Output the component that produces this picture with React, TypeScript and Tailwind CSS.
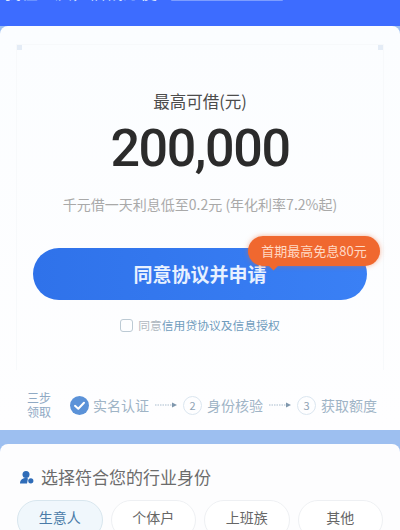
import React from "react";

const cjk = "font-['Noto_Sans_CJK_SC','Noto_Sans',sans-serif]";

function Corner({ className }: { className: string }) {
  return <span className={`absolute h-[5px] w-[5px] bg-[#e4ecf6] ${className}`}></span>;
}

function StepNumber({ n }: { n: number }) {
  return (
    <span className="flex h-[19px] w-[19px] shrink-0 items-center justify-center rounded-full border border-[#dbe6f0] text-[11px] leading-none text-[#8fa3b5]">
      {n}
    </span>
  );
}

function Arrow() {
  return (
    <svg width="22" height="6" viewBox="0 0 22 6" className="mx-[6px] shrink-0">
      <line x1="0" y1="3" x2="17" y2="3" stroke="#a9bccd" strokeWidth="1" strokeDasharray="1.5 1" />
      <path d="M17 0.5 L22 3 L17 5.5 Z" fill="#7f97ad" />
    </svg>
  );
}

export default function App() {
  const tags = ["生意人", "个体户", "上班族", "其他"];

  return (
    <div className={`h-[530px] w-[400px] overflow-hidden bg-[#9dbff0] ${cjk}`}>
      {/* blue header, the title is cut by the top edge */}
      <div className="flex h-[26px] items-start gap-[14px] overflow-hidden bg-[#3d6cff] pl-[4px]">
        <span className="mt-[-16px] whitespace-nowrap text-[17px] leading-[16px] text-[#dfe8ff]">我在重庆，借钱方便</span>
        <span className="h-[1px] w-[112px] rounded-b bg-[#7d9dff]"></span>
      </div>

      {/* main card */}
      <div className="flex h-[404px] flex-col rounded-t-[8px] bg-gradient-to-b from-[#fbfdff] to-[#fefeff]">
        <div className="relative mx-[16px] mt-[18px] flex h-[326px] flex-col items-center border-x border-t border-[#f7f9fb] pt-[45px]">
          <Corner className="left-0 top-0" />
          <Corner className="right-0 top-0" />
          <div className="text-[16.5px] leading-[22px] text-[#4c4c4c]">最高可借(元)</div>
          <div className="mt-[7px] font-['Roboto',sans-serif] text-[52px] font-medium leading-[60px] tracking-[-1.4px] text-[#2b2b2b]">200,000</div>
          <div className="mt-[16px] whitespace-nowrap text-[14px] leading-[18px] text-[#a9a9a9]">千元借一天利息低至0.2元 (年化利率7.2%起)</div>

          <div className="relative mt-[35px] flex h-[52px] w-[334px] shrink-0 items-center justify-center rounded-full bg-gradient-to-r from-[#2f72ea] to-[#3a80f5] text-[19px] font-bold text-[#e8f1ff]">
            同意协议并申请
            <div className="absolute right-[-13px] top-[-12px] flex h-[30px] w-[132px] items-center justify-center rounded-full bg-[#f0682f] text-[13px] font-normal text-[#ffd9c4] shadow-[0_0_5px_rgba(240,104,47,0.5)]">
              首期最高免息80元
              <span className="absolute bottom-[-3px] left-[22px] h-[7px] w-[7px] rotate-45 bg-[#f0682f]"></span>
            </div>
          </div>

          <div className="mt-[17px] flex items-center text-[11.8px] leading-[16px] text-[#b0b8c0]">
            <span className="mr-[5px] h-[13px] w-[13px] rounded-[3px] border border-[#bccad4]"></span>
            同意<span className="text-[#6f9cbd]">信用贷协议及信息授权</span>
          </div>
        </div>

        {/* steps */}
        <div className="mt-[20px] flex h-[30px] items-center pl-[27px] text-[#9fb4c6]">
          <div className="mr-[19px] w-[24px] text-[12px] leading-[14px] text-[#8fa9c4]">三步<br />领取</div>
          <svg width="19" height="19" viewBox="0 0 19 19" className="mr-[4px] shrink-0">
            <circle cx="9.5" cy="9.5" r="9.5" fill="#5b92d8" />
            <path d="M5 9.8 L8.3 12.8 L14 6.8" fill="none" stroke="#fff" strokeWidth="2" strokeLinecap="round" strokeLinejoin="round" />
          </svg>
          <span className="whitespace-nowrap text-[14px]">实名认证</span>
          <Arrow />
          <StepNumber n={2} />
          <span className="ml-[5px] whitespace-nowrap text-[14px]">身份核验</span>
          <Arrow />
          <StepNumber n={3} />
          <span className="ml-[5px] whitespace-nowrap text-[14px]">获取额度</span>
        </div>
      </div>

      {/* identity card */}
      <div className="mt-[14px] h-[86px] overflow-hidden rounded-t-[8px] bg-[#fdfdfe] px-[17px] pt-[22px]">
        <div className="flex items-center gap-[7px] pl-[3px]">
          <svg width="14" height="13" viewBox="0 0 14 13">
            <circle cx="6" cy="3.5" r="3.5" fill="#2f6cb8" />
            <path d="M0 12.5 C0 8.5 3 7 6 7 C7 7 8 7.3 8 7.3 L7 12.5 Z" fill="#2f6cb8" />
            <circle cx="10.8" cy="9.8" r="2.6" fill="#2f6cb8" />
          </svg>
          <span className="text-[17px] leading-[22px] text-[#6c6c6c]">选择符合您的行业身份</span>
        </div>
        <div className="mt-[12px] flex gap-[8px]">
          {tags.map((tag, i) => (
            <div
              key={tag}
              className={`flex h-[40px] w-[86px] items-start justify-center rounded-[20px] border pt-[6px] text-[14px] leading-[20px] ${
                i === 0 ? "border-[#d8e6ee] bg-[#f0f7fc] text-[#4a7ba8]" : "border-[#eef0f3] bg-white text-[#666666]"
              }`}
            >
              {tag}
            </div>
          ))}
        </div>
      </div>
    </div>
  );
}
